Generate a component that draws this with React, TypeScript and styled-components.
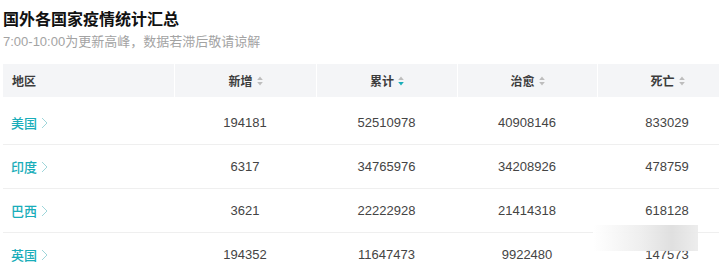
import styled, { createGlobalStyle } from 'styled-components';

const GlobalStyle = createGlobalStyle`
  html, body {
    margin: 0;
    padding: 0;
    background: #fff;
  }
  body {
    font-family: "Liberation Sans", "Noto Sans CJK SC", sans-serif;
    overflow: hidden;
  }
  * {
    box-sizing: border-box;
  }
`;

const TEAL = '#19adb9';

const Page = styled.div`
  position: relative;
  width: 719px;
  height: 267px;
  overflow: hidden;
  padding: 8px 0 0 3px;
`;

const Title = styled.h1`
  margin: 0;
  font-size: 16px;
  line-height: 24px;
  font-weight: bold;
  color: #111;
`;

const Subtitle = styled.p`
  margin: 1px 0 0;
  font-size: 13px;
  line-height: 18px;
  color: #a3a3a3;
`;

const Table = styled.div`
  margin-top: 13px;
  width: 734px;
`;

const COLS = '171px 142px 141px 140px 140px';

const HeadRow = styled.div`
  display: grid;
  grid-template-columns: ${COLS};
  height: 33px;
  background: #f4f5f7;
`;

const HeadCell = styled.div<{ $left?: boolean }>`
  display: flex;
  align-items: center;
  justify-content: ${(p) => (p.$left ? 'flex-start' : 'center')};
  padding-left: ${(p) => (p.$left ? '9px' : '0')};
  border-left: ${(p) => (p.$left ? 'none' : '1px solid #fff')};
  font-size: 12px;
  font-weight: bold;
  color: #3c3c3c;
  gap: 4px;
`;

const Body = styled.div`
  padding-top: 4px;
`;

const Row = styled.div`
  display: grid;
  grid-template-columns: ${COLS};
  height: 44px;
  border-bottom: 1px solid #efefef;
`;

const Cell = styled.div<{ $left?: boolean }>`
  display: flex;
  align-items: center;
  justify-content: ${(p) => (p.$left ? 'flex-start' : 'center')};
  font-size: 13px;
  color: #444;
`;

const Country = styled.a`
  display: flex;
  align-items: center;
  gap: 4px;
  padding-left: 8px;
  font-size: 13px;
  font-weight: 500;
  color: ${TEAL};
  text-decoration: none;
`;

const Watermark = styled.div`
  position: absolute;
  left: 593px;
  top: 225px;
  width: 105px;
  height: 26px;
  background: linear-gradient(
    to right,
    rgba(255, 255, 255, 0.95),
    rgba(238, 238, 238, 0.95) 45%,
    rgba(222, 222, 222, 0.95) 75%,
    rgba(236, 236, 236, 0.95)
  );
`;

function SortIcon({ active }: { active?: boolean }) {
  return (
    <svg width="6" height="10" viewBox="0 0 6 10">
      <path d="M3 0.5 L5.8 4 H0.2 Z" fill="#bdbdbd" />
      <path d="M3 9.5 L5.8 6 H0.2 Z" fill={active ? TEAL : '#bdbdbd'} />
    </svg>
  );
}

function Chevron() {
  return (
    <svg width="7" height="12" viewBox="0 0 7 12">
      <path d="M1 1 L6 6 L1 11" fill="none" stroke="#9fd6da" strokeWidth="1" />
    </svg>
  );
}

const rows = [
  { name: '美国', add: '194181', total: '52510978', cured: '40908146', dead: '833029' },
  { name: '印度', add: '6317', total: '34765976', cured: '34208926', dead: '478759' },
  { name: '巴西', add: '3621', total: '22222928', cured: '21414318', dead: '618128' },
  { name: '英国', add: '194352', total: '11647473', cured: '9922480', dead: '147573' },
];

export default function App() {
  return (
    <>
      <GlobalStyle />
      <Page>
        <Title>国外各国家疫情统计汇总</Title>
        <Subtitle>7:00-10:00为更新高峰，数据若滞后敬请谅解</Subtitle>
        <Table>
          <HeadRow>
            <HeadCell $left>地区</HeadCell>
            <HeadCell>新增<SortIcon /></HeadCell>
            <HeadCell>累计<SortIcon active /></HeadCell>
            <HeadCell>治愈<SortIcon /></HeadCell>
            <HeadCell>死亡<SortIcon /></HeadCell>
          </HeadRow>
          <Body>
            {rows.map((r) => (
              <Row key={r.name}>
                <Cell $left>
                  <Country href="#">{r.name}<Chevron /></Country>
                </Cell>
                <Cell>{r.add}</Cell>
                <Cell>{r.total}</Cell>
                <Cell>{r.cured}</Cell>
                <Cell>{r.dead}</Cell>
              </Row>
            ))}
          </Body>
        </Table>
        <Watermark />
      </Page>
    </>
  );
}
